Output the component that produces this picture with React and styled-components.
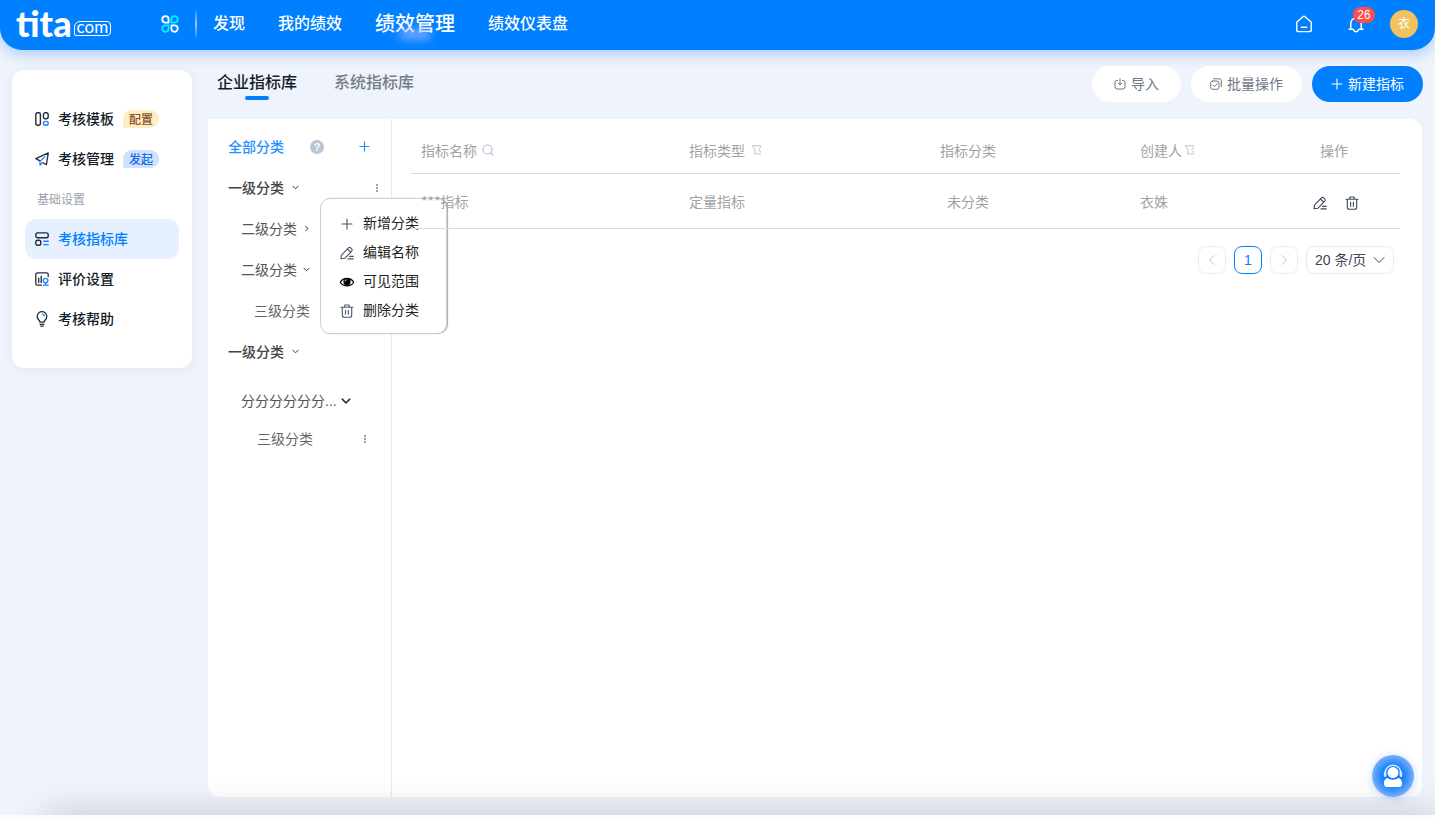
import React from "react";
import styled, { createGlobalStyle, css } from "styled-components";

const GlobalStyle = createGlobalStyle`
  *, *::before, *::after { box-sizing: border-box; }
  body {
    margin: 0;
    background: #eff3fb;
    color: #141c28;
    font-family: "Liberation Sans", "Noto Sans CJK SC", sans-serif;
    font-size: 14px;
    line-height: 20px;
  }
  button, select { font: inherit; color: inherit; }
  button { padding: 0; border: 0; background: none; cursor: pointer; }
  a { color: inherit; text-decoration: none; }
  ul { margin: 0; padding: 0; list-style: none; }
  svg { display: block; flex: none; }
`;

const Page = styled.div`
  position: relative;
  display: flex;
  flex-direction: column;
  min-height: 100vh;
  overflow: hidden;
`;

/* ---------- top bar ---------- */

const TopBar = styled.header`
  display: flex;
  align-items: center;
  height: 50px;
  padding: 0 17px 2px 16px;
  border-radius: 0 0 22px 22px;
  background: #0080ff;
  color: #fff;
  box-shadow: 0 4px 14px rgba(0, 112, 255, 0.3);
`;

const Logo = styled.a`
  display: flex;
  align-items: flex-end;
  gap: 2px;
  width: 98px;
  height: 24px;
`;

const LogoName = styled.span`
  font: 900 36px/26px Lato, sans-serif;
`;

const LogoSuffix = styled.span`
  height: 15px;
  padding: 0 2px;
  border: 1px solid #fff;
  border-radius: 6px 4px 4px 2px;
  font: 400 17px/10px Lato, sans-serif;
`;

const AppsButton = styled.button`
  margin-left: 47px;
`;

const BarDivider = styled.span`
  width: 2px;
  height: 28px;
  margin: 0 16px;
  background: linear-gradient(rgba(255, 255, 255, 0.1), rgba(255, 255, 255, 0.6), rgba(255, 255, 255, 0.1));
`;

const TopNav = styled.nav`
  display: flex;
  align-items: center;
  gap: 33px;
  flex: 1;
`;

const TopLink = styled.a`
  position: relative;
  font-size: ${(p) => (p.$active ? 20 : 16)}px;
  line-height: 24px;
  font-weight: 500;
  white-space: nowrap;
  ${(p) =>
    p.$active &&
    css`
      &::after {
        content: "";
        position: absolute;
        left: 24px;
        bottom: -4px;
        width: 32px;
        height: 12px;
        border-radius: 6px;
        background: rgba(150, 180, 255, 0.7);
        filter: blur(4px);
      }
    `}
`;

const TopTools = styled.div`
  display: flex;
  align-items: center;
`;

const ToolButton = styled.button`
  position: relative;
  margin-right: ${(p) => p.$gap}px;
`;

const Badge = styled.span`
  position: absolute;
  left: 6px;
  top: -8px;
  min-width: 22px;
  height: 16px;
  border-radius: 8px;
  background: #ff4d4f;
  font-size: 12px;
  line-height: 16px;
  text-align: center;
`;

const Avatar = styled.button`
  width: 28px;
  height: 28px;
  border-radius: 50%;
  background: #f2c25f;
  color: #fff;
  font-size: 12px;
`;

/* ---------- body ---------- */

const Body = styled.div`
  display: flex;
  align-items: flex-start;
  flex: 1;
  gap: 16px;
  padding: 0 13px 18px 12px;
`;

const Sidebar = styled.aside`
  flex: none;
  width: 180px;
  margin-top: 20px;
  padding: 29px 13px;
  border-radius: 12px;
  background: #fff;
  box-shadow: 0 2px 12px rgba(60, 90, 140, 0.08);
`;

const SideLink = styled.a`
  display: flex;
  align-items: center;
  height: 40px;
  padding-left: 10px;
  gap: 9px;
  border-radius: 12px;
  font-weight: 500;
  ${(p) =>
    p.$active &&
    css`
      background: #e6f0fe;
      color: #0080ff;
    `}
`;

const SideLabel = styled.div`
  height: 40px;
  padding-left: 12px;
  font-size: 12px;
  line-height: 42px;
  color: #9aa1ab;
`;

const Tag = styled.span`
  height: 18px;
  padding: 0 6px;
  border-radius: 9px 9px 9px 2px;
  background: ${(p) => (p.$warm ? "#ffedc6" : "#cfe1fd")};
  color: ${(p) => (p.$warm ? "#86502c" : "#0f6ee8")};
  font-size: 12px;
  line-height: 20px;
`;

const Main = styled.main`
  display: flex;
  flex-direction: column;
  align-self: stretch;
  flex: 1;
  min-width: 0;
`;

const Toolbar = styled.div`
  display: flex;
  align-items: flex-start;
  justify-content: space-between;
  height: 69px;
  padding: 16px 0 0 9px;
  margin-right: -1px;
`;

const Tabs = styled.div`
  display: flex;
  gap: 37px;
`;

const Tab = styled.button`
  display: flex;
  flex-direction: column;
  align-items: center;
  font-size: 16px;
  line-height: 34px;
  font-weight: 500;
  color: ${(p) => (p.$active ? "#141c28" : "#747d8a")};
  &::after {
    content: "";
    width: 24px;
    height: 4px;
    margin-top: -4px;
    border-radius: 2px;
    background: ${(p) => (p.$active ? "#0080ff" : "transparent")};
  }
`;

const Actions = styled.div`
  display: flex;
  gap: 10px;
`;

const PillButton = styled.button`
  display: flex;
  align-items: center;
  gap: 5px;
  height: 36px;
  padding: 0 ${(p) => (p.$wide ? 22 : 19)}px;
  border-radius: 18px;
  background: ${(p) => (p.$primary ? "#0080ff" : "#fff")};
  color: ${(p) => (p.$primary ? "#fff" : "#6f7886")};
  white-space: nowrap;
`;

const Card = styled.section`
  display: flex;
  flex: 1;
  border-radius: 0 12px 12px 12px;
  background: #fff;
`;

/* ---------- category tree ---------- */

const Tree = styled.div`
  flex: none;
  width: 184px;
  padding-top: 7px;
  border-right: 1px solid #e8eaee;
`;

const TreeHead = styled.div`
  display: flex;
  align-items: center;
  height: 41px;
  padding: 0 20px;
  color: #2a91ff;
  font-weight: 500;
`;

const HelpButton = styled.button`
  width: 14px;
  height: 14px;
  margin: 0 35px 0 26px;
  border-radius: 50%;
  background: #b9c5d4;
  color: #fff;
  font-size: 11px;
  font-weight: 700;
  line-height: 14px;
`;

const TreeRow = styled.li`
  position: relative;
  display: flex;
  align-items: center;
  justify-content: space-between;
  height: ${(p) => (p.$compact ? 36 : 41)}px;
  margin-top: ${(p) => (p.$spaced ? 8 : 0)}px;
  padding-left: ${(p) => [20, 33, 46, 49][p.$indent]}px;
  padding-right: ${(p) => (p.$compact ? 24 : 12)}px;
  color: ${(p) => ["#444", "#555", "#666", "#666"][p.$indent]};
  font-weight: ${(p) => (p.$indent === 0 ? 500 : 400)};
`;

const TreeName = styled.button`
  display: flex;
  align-items: center;
  gap: ${(p) => p.$gap}px;
  font-weight: inherit;
  color: inherit;
`;

const Menu = styled.ul`
  position: absolute;
  left: 112px;
  top: 31px;
  width: 127px;
  padding: 9px 0;
  border: 1px solid #cfcfcf;
  border-radius: 10px;
  background: #fff;
  box-shadow: 1px 0 1px #aaa;
  color: #222;
  font-weight: 400;
`;

const MenuButton = styled.button`
  display: grid;
  grid-template-columns: 14px auto;
  align-items: center;
  justify-content: start;
  gap: 9px;
  width: 100%;
  height: 29px;
  padding-left: 19px;
  svg { margin-top: 3px; justify-self: center; }
`;

/* ---------- metric table ---------- */

const Content = styled.div`
  position: relative;
  z-index: 1;
  flex: 1;
  min-width: 0;
  padding: 8px 22px 0 19px;
`;

const Table = styled.table`
  width: 100%;
  table-layout: fixed;
  border-collapse: separate;
  border-spacing: 0;
  color: #a2a2a2;
  font-family: "Noto Sans CJK SC", sans-serif;
`;

const Cell = styled.td`
  height: ${(p) => (p.as === "th" ? 47 : 55)}px;
  padding: 0 ${(p) => (p.$center ? 0 : 10)}px;
  border-bottom: 1px solid #dcdcdc;
  text-align: ${(p) => (p.$center ? "center" : "left")};
  font-weight: 400;
`;

const HeadLabel = styled.span`
  display: flex;
  align-items: center;
  gap: ${(p) => p.$gap}px;
`;

const RowActions = styled.div`
  display: flex;
  justify-content: center;
  gap: 18px;
  padding: 3px 0 0 4px;
  color: #3d4757;
`;

const Pager = styled.nav`
  display: flex;
  justify-content: flex-end;
  gap: 8px;
  padding: 17px 6px 0 0;
`;

const PageButton = styled.button`
  display: grid;
  place-items: center;
  width: 28px;
  height: 28px;
  border: 1px solid ${(p) => (p.$current ? "#0080ff" : "#e9ebee")};
  border-radius: 8px;
  color: ${(p) => (p.$current ? "#0080ff" : "#bcc4d0")};
`;

const SizePicker = styled.label`
  position: relative;
  color: #3d4757;
  svg { position: absolute; right: 9px; top: 8px; pointer-events: none; }
`;

const SizeSelect = styled.select`
  appearance: none;
  width: 88px;
  height: 28px;
  padding: 0 8px;
  border: 1px solid #e9ebee;
  border-radius: 8px;
  background: #fff;
`;

/* ---------- bottom edge ---------- */

const BottomEdge = styled.footer`
  position: relative;
  z-index: 2;
  height: 3px;
  background: #fbfbfb;
  &::before {
    content: "";
    position: absolute;
    z-index: -1;
    left: 48px;
    right: 0;
    top: 0;
    height: 30px;
    box-shadow: 0 0 36px rgba(60, 64, 70, 0.28);
    clip-path: inset(-40px -60px 30px -60px);
  }
`;

const SupportButton = styled.button`
  position: fixed;
  z-index: 3;
  right: 21px;
  bottom: 21px;
  display: grid;
  place-items: center;
  width: 42px;
  height: 42px;
  border-radius: 50%;
  background: radial-gradient(circle, #0a7bff 30%, #7fb4f6 74%);
  box-shadow: 0 1px 8px rgba(30, 100, 220, 0.25);
`;

/* ---------- icons ---------- */

function Icon({ size = 14, box = 14, width = 1, children, ...rest }) {
  return (
    <svg
      width={size}
      height={size}
      viewBox={`0 0 ${box} ${box}`}
      fill="none"
      stroke="currentColor"
      strokeWidth={width}
      strokeLinecap="round"
      strokeLinejoin="round"
      aria-hidden="true"
      {...rest}
    >
      {children}
    </svg>
  );
}

const Caret = ({ right, size = 7, width = 1.2 }) => (
  <Icon size={size} box={8} width={width} color="#333">
    <path d={right ? "M3 1.5 5.8 4 3 6.5" : "M1 2.5 4 5.5 7 2.5"} />
  </Icon>
);

const Dots = () => (
  <svg width="4" height="10" viewBox="0 0 4 10" fill="#a0a0a0" aria-hidden="true">
    <rect x="1" y="1" width="2" height="2" />
    <rect x="1" y="4" width="2" height="2" />
    <rect x="1" y="7" width="2" height="2" />
  </svg>
);

const Plus = ({ size, color, width = 1.1 }) => (
  <Icon size={size} box={12} color={color} width={width}>
    <path d="M6 1v10M1 6h10" />
  </Icon>
);

const Pencil = ({ size = 14, color }) => (
  <Icon size={size} width={1.1} color={color}>
    <path d="M1 12.7l.5-3.6 6.9-7.2a1.6 1.6 0 0 1 2.3 0l1 1a1.6 1.6 0 0 1 0 2.3L5 12.2zM7.4 3l3.2 3.2M9.5 10.4h3.7M8 12.9h5.2" />
  </Icon>
);

const Trash = ({ size = 14, color }) => (
  <Icon size={size} width={1.1} color={color}>
    <path d="M1 3.2h12M4.8 3V1h4.4v2M2.3 3.4v7.8a2 2 0 0 0 2 2h5.4a2 2 0 0 0 2-2V3.4M5.6 6.2v4M8.4 6.2v4" />
  </Icon>
);

const Eye = () => (
  <svg width="16" height="14" viewBox="0 0 15 14" aria-hidden="true">
    <path d="M.8 7.2C3.8 2 11.2 2 14.2 7.2 11.2 12 3.8 12 .8 7.2z" fill="#fff" stroke="#000" strokeWidth="1.2" />
    <circle cx="7.5" cy="6.8" r="3.6" fill="#000" />
    <path d="M5.4 6.4a2 2 0 0 1 1.7-1.7" fill="none" stroke="#fff" strokeWidth="0.9" />
  </svg>
);

const Filter = () => (
  <Icon size={10} box={10} width={0.9} color="#b0bccd">
    <path d="M1 .8h7.600v1.500L7 4.300v1.200M1 .8v1.500l1.900 2.200v4.700l2.500-.9M7.600 6.900h1.200M6.600 9h2.200" />
  </Icon>
);

const SearchGlyph = () => (
  <Icon size={12} box={12} width={1.1} color="#b0bccd">
    <circle cx="5.5" cy="5.5" r="4.5" />
    <path d="M9 9l2 2" />
  </Icon>
);

const AppsGlyph = () => (
  <Icon size={18} box={18} width={1.8}>
    <path d="M4.5 1.2a3.2 3.2 0 1 0 0 6.4h3.1V4.4a3.2 3.2 0 0 0-3.1-3.2z" />
    <path d="M13.5 16.8a3.2 3.2 0 1 0 0-6.4h-3.1v3.2a3.2 3.2 0 0 0 3.1 3.2z" />
    <path stroke="#00f0ff" d="M13.5 1.2a3.2 3.2 0 1 1 0 6.4h-3.1V4.4a3.2 3.2 0 0 1 3.1-3.2z" />
    <path stroke="#00f0ff" d="M4.5 16.8a3.2 3.2 0 1 1 0-6.4h3.1v3.2a3.2 3.2 0 0 1-3.1 3.2z" />
  </Icon>
);

const HomeGlyph = () => (
  <Icon size={18} box={18} width={1.4}>
    <path d="M1.7 7.2 7.9 1.8a1.7 1.7 0 0 1 2.2 0l6.2 5.4v7.5a1.9 1.9 0 0 1-1.9 1.9H3.6a1.9 1.9 0 0 1-1.9-1.9zM6.3 12.3h5.4" />
  </Icon>
);

const BellGlyph = () => (
  <Icon size={18} box={18} width={1.5}>
    <path d="M3.8 14V8.2a5.2 5.2 0 0 1 10.4 0V14M2 14.3h3.8c.5 0 .9.4 1 .9a2.3 2.3 0 0 0 4.4 0c.1-.5.5-.9 1-.9H16M9 1.5V3" />
  </Icon>
);

const BLUE = "#1684ff";

const TemplateGlyph = () => (
  <Icon width={1.4} color="#222b38">
    <rect x="0.8" y="0.8" width="4.6" height="12.4" rx="1.6" />
    <rect x="8.4" y="0.8" width="4.8" height="6" rx="2" />
    <rect x="8.4" y="9.4" width="4.8" height="3.8" rx="1.9" stroke={BLUE} />
  </Icon>
);

const PlaneGlyph = () => (
  <Icon width={1.3} color="#222b38">
    <path d="M5 8.8.8 6.6 13.3.9l-1.9 11.8-3.3-1.9" />
    <path d="M10 4.6 5 9.4v3.6l2.4-2.2" stroke={BLUE} />
  </Icon>
);

const LibraryGlyph = () => (
  <Icon width={1.4} color="#222b38">
    <rect x="0.8" y="0.9" width="12.4" height="4.8" rx="1.8" />
    <rect x="0.8" y="8.2" width="5" height="5" rx="1.8" />
    <path d="M8.7 9.2h4.6M8.7 12.6h4.6" stroke={BLUE} />
  </Icon>
);

const ReviewGlyph = () => (
  <Icon width={1.3} color="#222b38">
    <path d="M13.2 4.6V2.4A1.6 1.6 0 0 0 11.6.8H2.4A1.6 1.6 0 0 0 .8 2.4v9.2a1.6 1.6 0 0 0 1.6 1.6h4M3.7 6.2v4.3M6.2 4.2v6.3" />
    <path d="M10.6 11v2.2M8.3 13.2h4.9" stroke={BLUE} />
    <circle cx="10.6" cy="8.6" r="2.3" stroke={BLUE} />
  </Icon>
);

const BulbGlyph = () => (
  <svg
    width="14"
    height="16"
    viewBox="1 0 14 16"
    fill="none"
    stroke="#222b38"
    strokeWidth="1.3"
    strokeLinecap="round"
    aria-hidden="true"
  >
    <path d="M6 11.2c0-1-.5-1.5-1.200-2.200a4.800 4.800 0 1 1 6.400 0c-.7.7-1.200 1.200-1.200 2.200zM6 13.300h4M6.800 15.200h2.400" />
    <path d="M8.600 3.200a2.400 2.400 0 0 1 1.700 1.700" stroke={BLUE} />
  </svg>
);

const ImportGlyph = () => (
  <Icon size={12} box={12}>
    <path d="M3.500 2.500H2.500a1.500 1.500 0 0 0-1.500 1.500v5a2 2 0 0 0 2 2h6a2 2 0 0 0 2-2V4a1.500 1.500 0 0 0-1.500-1.500H8.500M6 .8v6M4 5l2 2 2-2" />
  </Icon>
);

const BatchGlyph = () => (
  <Icon size={12} box={12}>
    <rect x="0.700" y="3" width="8.300" height="8.300" rx="2" />
    <path d="M3 7l1.500 1.500L7.200 5.700M3.500.8h5.800a2 2 0 0 1 2 2v5.700" />
  </Icon>
);

const SupportGlyph = () => (
  <svg width="22" height="24" viewBox="0 0 22 24" fill="#fff" aria-hidden="true">
    <path d="M3.200 9a7.800 7.800 0 0 1 15.600 0" fill="none" stroke="#d8eaff" strokeWidth="1.500" />
    <rect x="1.800" y="7.500" width="2.600" height="5.500" rx="1.300" fill="#d8eaff" />
    <rect x="17.600" y="7.500" width="2.600" height="5.500" rx="1.300" fill="#d8eaff" />
    <circle cx="11" cy="8.600" r="5.500" />
    <path d="M5.500 14c3.200 2.200 7.800 2.200 11 0 2.300.5 3.500 2.400 3.500 4.900 0 3-1 4-3 4H5c-2 0-3-1-3-4 0-2.500 1.200-4.400 3.500-4.900z" />
  </svg>
);

/* ---------- data ---------- */

const menuItems = [
  { label: "新增分类", icon: <Plus size={12} color="#555" /> },
  { label: "编辑名称", icon: <Pencil size={14} color="#4a5566" /> },
  { label: "可见范围", icon: <Eye /> },
  { label: "删除分类", icon: <Trash size={14} color="#4a5566" /> },
];

const treeItems = [
  { name: "一级分类", indent: 0, caret: "down", more: true, menu: true },
  { name: "二级分类", indent: 1, caret: "right" },
  { name: "二级分类", indent: 1, caret: "down" },
  { name: "三级分类", indent: 2 },
  { name: "一级分类", indent: 0, caret: "down" },
  { name: "分分分分分分...", indent: 1, caret: "big", spaced: true },
  { name: "三级分类", indent: 3, more: true, compact: true },
];

const caretGap = (item) => {
  if (item.caret === "big") return 4;
  return item.indent === 0 ? 8 : 6;
};

const columnWidths = [268, 127, 324, 138, 132];

export default function App() {
  return (
    <Page>
      <GlobalStyle />
      <TopBar>
        <Logo href="#" aria-label="tita.com">
          <LogoName>tita</LogoName>
          <LogoSuffix>com</LogoSuffix>
        </Logo>
        <AppsButton aria-label="应用">
          <AppsGlyph />
        </AppsButton>
        <BarDivider />
        <TopNav>
          <TopLink href="#">发现</TopLink>
          <TopLink href="#">我的绩效</TopLink>
          <TopLink href="#" $active>绩效管理</TopLink>
          <TopLink href="#">绩效仪表盘</TopLink>
        </TopNav>
        <TopTools>
          <ToolButton $gap={34} aria-label="首页">
            <HomeGlyph />
          </ToolButton>
          <ToolButton $gap={25} aria-label="通知">
            <BellGlyph />
            <Badge>26</Badge>
          </ToolButton>
          <Avatar>衣</Avatar>
        </TopTools>
      </TopBar>

      <Body>
        <Sidebar>
          <SideLink href="#"><TemplateGlyph />考核模板<Tag $warm>配置</Tag></SideLink>
          <SideLink href="#"><PlaneGlyph />考核管理<Tag>发起</Tag></SideLink>
          <SideLabel>基础设置</SideLabel>
          <SideLink href="#" $active><LibraryGlyph />考核指标库</SideLink>
          <SideLink href="#"><ReviewGlyph />评价设置</SideLink>
          <SideLink href="#"><BulbGlyph />考核帮助</SideLink>
        </Sidebar>

        <Main>
          <Toolbar>
            <Tabs>
              <Tab $active>企业指标库</Tab>
              <Tab>系统指标库</Tab>
            </Tabs>
            <Actions>
              <PillButton $wide><ImportGlyph />导入</PillButton>
              <PillButton><BatchGlyph />批量操作</PillButton>
              <PillButton $primary><Plus size={12} />新建指标</PillButton>
            </Actions>
          </Toolbar>

          <Card>
            <Tree>
              <TreeHead>
                全部分类
                <HelpButton aria-label="帮助">?</HelpButton>
                <button aria-label="新增分类"><Plus size={11} color="#2a91ff" width={1.3} /></button>
              </TreeHead>
              <ul>
                {treeItems.map((item, i) => (
                  <TreeRow key={i} $indent={item.indent} $spaced={item.spaced} $compact={item.compact}>
                    <TreeName $gap={caretGap(item)}>
                      {item.name}
                      {item.caret && (
                        <Caret
                          right={item.caret === "right"}
                          size={item.caret === "big" ? 10 : 7}
                          width={item.caret === "big" ? 1.2 : 1.1}
                        />
                      )}
                    </TreeName>
                    {item.more && <button aria-label="更多"><Dots /></button>}
                    {item.menu && (
                      <Menu>
                        {menuItems.map((m) => (
                          <li key={m.label}>
                            <MenuButton>{m.icon}{m.label}</MenuButton>
                          </li>
                        ))}
                      </Menu>
                    )}
                  </TreeRow>
                ))}
              </ul>
            </Tree>

            <Content>
              <Table>
                <colgroup>
                  {columnWidths.map((w) => <col key={w} width={w} />)}
                </colgroup>
                <thead>
                  <tr>
                    <Cell as="th"><HeadLabel $gap={5}>指标名称<SearchGlyph /></HeadLabel></Cell>
                    <Cell as="th"><HeadLabel $gap={7}>指标类型<Filter /></HeadLabel></Cell>
                    <Cell as="th" $center>指标分类</Cell>
                    <Cell as="th"><HeadLabel $gap={3}>创建人<Filter /></HeadLabel></Cell>
                    <Cell as="th" $center>操作</Cell>
                  </tr>
                </thead>
                <tbody>
                  <tr>
                    <Cell>***指标</Cell>
                    <Cell>定量指标</Cell>
                    <Cell $center>未分类</Cell>
                    <Cell>衣姝</Cell>
                    <Cell $center>
                      <RowActions>
                        <button aria-label="编辑"><Pencil /></button>
                        <button aria-label="删除"><Trash /></button>
                      </RowActions>
                    </Cell>
                  </tr>
                </tbody>
              </Table>
              <Pager aria-label="分页">
                <PageButton aria-label="上一页">
                  <Icon size={12} box={12}><path d="M8 1.500 3.500 6 8 10.500" /></Icon>
                </PageButton>
                <PageButton $current>1</PageButton>
                <PageButton aria-label="下一页">
                  <Icon size={12} box={12}><path d="M4 1.500 8.500 6 4 10.500" /></Icon>
                </PageButton>
                <SizePicker>
                  <SizeSelect aria-label="每页条数" defaultValue="20">
                    <option value="20">20 条/页</option>
                    <option value="50">50 条/页</option>
                  </SizeSelect>
                  <Icon size={12} box={12}><path d="M1 3.500 6 8.500 11 3.500" /></Icon>
                </SizePicker>
              </Pager>
            </Content>
          </Card>
        </Main>
      </Body>

      <BottomEdge />
      <SupportButton aria-label="在线客服">
        <SupportGlyph />
      </SupportButton>
    </Page>
  );
}
